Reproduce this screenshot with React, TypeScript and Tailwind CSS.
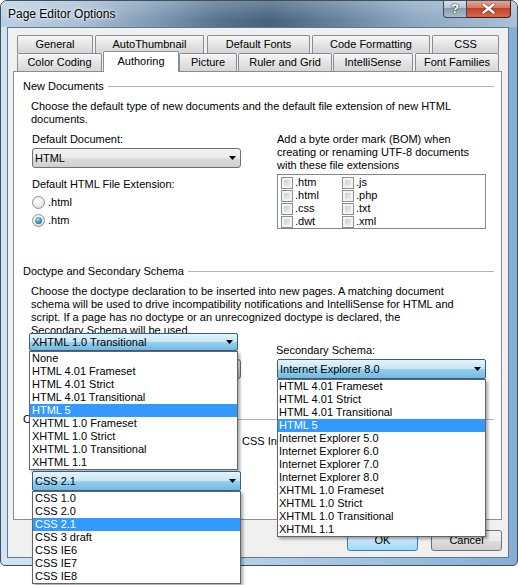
import React from "react";

const Arrow = () => (
  <svg width="7" height="4" viewBox="0 0 7 4" className="shrink-0">
    <path d="M0 0H7L3.5 4Z" fill="#000" />
  </svg>
);

const tabBase =
  "h-[18px] flex items-center justify-center border-t border-x border-[#898c95] rounded-t-[2px] bg-[linear-gradient(#f6f6f6,#e3e3e3_55%,#d6d6d6)] whitespace-nowrap shrink-0";

const comboClosed =
  "h-[20px] w-[209px] flex items-center pl-[2px] pr-[4px] border border-[#707070] rounded-[3px] bg-[linear-gradient(#f2f2f2,#ebebeb_50%,#dddddd_50%,#cfcfcf)]";

const comboOpen =
  "flex items-center pl-[2px] pr-[4px] border border-[#2c628b] rounded-[2px] bg-[linear-gradient(#e5f4fc,#c4e5f6_50%,#98d1ef_50%,#74b9e0)]";

function Radio({ checked }: { checked?: boolean }) {
  return (
    <span className="w-[13px] h-[13px] rounded-full border border-[#8e8f8f] bg-[radial-gradient(circle_at_40%_35%,#ffffff,#f0f0f0_45%,#cfcfcf)] flex items-center justify-center shrink-0">
      {checked && (
        <span className="w-[7px] h-[7px] rounded-full bg-[radial-gradient(circle_at_40%_35%,#a9dcf9,#3d8ac4_55%,#17507f)]" />
      )}
    </span>
  );
}

function Check({ label }: { label: string }) {
  return (
    <div className="flex items-center gap-[2px] h-[13px]">
      <span className="w-[12px] h-[12px] border border-[#8f8f8f] bg-[#f4f4f4] p-[2px] shrink-0">
        <span className="block w-full h-full bg-[linear-gradient(135deg,#c9cdd3,#eeeeee)]" />
      </span>
      <span>{label}</span>
    </div>
  );
}

function ListItems({ items, sel, pad }: { items: string[]; sel: string; pad: string }) {
  return (
    <>
      {items.map((t) => (
        <div
          key={t}
          className={
            t === sel
              ? `h-[13px] leading-[13px] whitespace-nowrap bg-[#3399ff] text-white ${pad}`
              : `h-[13px] leading-[13px] whitespace-nowrap ${pad}`
          }
        >
          {t}
        </div>
      ))}
    </>
  );
}

function Heading({ label, className }: { label: string; className: string }) {
  return (
    <div className={`pl-[9px] pr-[7px] flex items-center gap-[4px] ${className}`}>
      <span className="whitespace-nowrap">{label}</span>
      <div className="flex-1 h-px bg-[#b5b5b5]" />
    </div>
  );
}

export default function App() {
  return (
    <div className="relative w-[518px] h-[585px] bg-white overflow-hidden font-['Liberation_Sans',Arial,sans-serif] text-[11px] leading-[13px] text-black">
      {/* window */}
      <div className="w-[518px] h-[566px] flex flex-col border border-[#3d4f63] rounded-t-[7px] rounded-b-[5px] overflow-hidden bg-[linear-gradient(90deg,#d3e3f2,#b4cfe8_50%,#86aed4)]">
        {/* title bar */}
        <div className="h-[26px] shrink-0 flex items-start bg-[linear-gradient(180deg,rgba(255,255,255,0.22),rgba(255,255,255,0)_75%),linear-gradient(90deg,#bccfe2_0%,#a9c0d6_15%,#7e98b2_30%,#57728e_42%,#48627d_52%,#67839f_66%,#8ea8c1_80%,#aac1d7_100%)]">
          <div className="pl-[7px] pt-[6px] text-[12px] leading-[14px] [text-shadow:0_0_6px_#ffffff,0_0_3px_#ffffff]">
            Page Editor Options
          </div>
          <div className="ml-auto mr-[6px] -mt-px flex">
            <div className="w-[24px] h-[18px] border border-t-0 border-[#3a4a5c] rounded-bl-[4px] bg-[linear-gradient(#dbe3ea,#b3c1cf_50%,#8d9db0_50%,#aabbcc)] flex items-center justify-center text-white font-bold text-[13px] leading-[13px] [text-shadow:0_0_2px_#1d2b3a,0_0_1px_#1d2b3a]">
              ?
            </div>
            <div className="w-[44px] h-[18px] border border-t-0 border-l-0 border-[#4a1b14] rounded-br-[4px] bg-[linear-gradient(#e9ab9f,#d4735f_50%,#c0412a_50%,#d66a4b)] flex items-center justify-center">
              <svg width="15" height="11" viewBox="0 0 15 11">
                <path d="M2.5 1.5L12.5 9.5M12.5 1.5L2.5 9.5" stroke="#5a1a10" strokeWidth="4" strokeLinecap="round" opacity="0.55" />
                <path d="M2.5 1.5L12.5 9.5M12.5 1.5L2.5 9.5" stroke="#ffffff" strokeWidth="2.4" strokeLinecap="round" />
              </svg>
            </div>
          </div>
        </div>

        {/* client area */}
        <div className="ml-[6px] mr-[8px] h-[531px] shrink-0 border border-[#5f7893] bg-[#f0f0f0] flex flex-col">
          <div className="ml-[5px] mt-[7px] w-[489px]">
            {/* tab row 1 */}
            <div className="flex h-[18px]">
              <div className={`${tabBase} ml-[4px] w-[76px]`}>General</div>
              <div className={`${tabBase} ml-[2px] w-[109px]`}>AutoThumbnail</div>
              <div className={`${tabBase} ml-[3px] w-[103px]`}>Default Fonts</div>
              <div className={`${tabBase} ml-[2px] w-[118px]`}>Code Formatting</div>
              <div className={`${tabBase} ml-[2px] w-[67px]`}>CSS</div>
            </div>
            {/* tab row 2 */}
            <div className="flex h-[18px] items-end">
              <div className={`${tabBase} ml-[4px] w-[85px]`}>Color Coding</div>
              <div className="relative z-10 ml-[1px] w-[76px] h-[21px] -mb-px shrink-0 flex items-center justify-center pb-[1px] border-t border-x border-[#898c95] rounded-t-[2px] bg-white">
                Authoring
              </div>
              <div className={`${tabBase} w-[58px]`}>Picture</div>
              <div className={`${tabBase} ml-[1px] w-[94px]`}>Ruler and Grid</div>
              <div className={`${tabBase} ml-[1px] w-[80px]`}>IntelliSense</div>
              <div className={`${tabBase} ml-[2px] w-[84px]`}>Font Families</div>
            </div>
            {/* panel */}
            <div className="h-[449px] w-[489px] border border-[#898c95] bg-white">
              <Heading label="New Documents" className="pt-[8px]" />
              <p className="mt-[7px] pl-[17px] whitespace-nowrap">
                Choose the default type of new documents and the default file extension of new HTML
                <br />
                documents.
              </p>
              <div className="mt-[7px] pl-[18px] flex">
                <div className="w-[209px] shrink-0">
                  <div>Default Document:</div>
                  <div className={`mt-[2px] ${comboClosed}`}>
                    <span>HTML</span>
                    <span className="ml-auto">
                      <Arrow />
                    </span>
                  </div>
                  <div className="mt-[10px]">Default HTML File Extension:</div>
                  <div className="mt-[5px] h-[13px] flex items-center gap-[3px]">
                    <Radio />
                    <span>.html</span>
                  </div>
                  <div className="mt-[5px] h-[13px] flex items-center gap-[3px]">
                    <Radio checked />
                    <span>.htm</span>
                  </div>
                </div>
                <div className="ml-[36px] w-[209px] shrink-0">
                  <div className="whitespace-nowrap">
                    Add a byte order mark (BOM) when
                    <br />
                    creating or renaming UTF-8 documents
                    <br />
                    with these file extensions
                  </div>
                  <div className="mt-[2px] h-[55px] w-[209px] border border-[#828790] bg-white pt-[1px] pl-[3px] grid grid-cols-[61px_1fr] overflow-hidden">
                    <div>
                      <Check label=".htm" />
                      <Check label=".html" />
                      <Check label=".css" />
                      <Check label=".dwt" />
                    </div>
                    <div>
                      <Check label=".js" />
                      <Check label=".php" />
                      <Check label=".txt" />
                      <Check label=".xml" />
                    </div>
                  </div>
                </div>
              </div>

              <Heading label="Doctype and Secondary Schema" className="mt-[36px]" />
              <p className="mt-[7px] pl-[17px] whitespace-nowrap">
                Choose the doctype declaration to be inserted into new pages. A matching document
                <br />
                schema will be used to drive incompatibility notifications and IntelliSense for HTML and
                <br />
                script. If a page has no doctype or an unrecognized doctype is declared, the
                <br />
                Secondary Schema will be used.
              </p>
              <div className="mt-[7px] pl-[18px] flex">
                <div className="w-[209px] shrink-0">
                  <div className="h-[13px]" />
                  <div className={`mt-[2px] ${comboClosed}`} />
                </div>
                <div className="ml-[35px] w-[210px] shrink-0">
                  <div>Secondary Schema:</div>
                  <div className="mt-[2px] h-[20px]" />
                </div>
              </div>

              <Heading label="C" className="mt-[34px]" />
              <div className="mt-[9px] pl-[228px] whitespace-nowrap">CSS Int</div>
            </div>
          </div>

          {/* buttons */}
          <div className="mt-[10px] mr-[6px] flex justify-end">
            <div className="w-[71px] h-[21px] border border-[#3c7fb1] rounded-[3px] bg-[linear-gradient(#eaf6fd,#d9f0fc_50%,#bee6fd_50%,#a7d9f5)] flex items-center justify-center">
              OK
            </div>
            <div className="ml-[13px] w-[71px] h-[21px] border border-[#707070] rounded-[3px] bg-[linear-gradient(#f2f2f2,#ebebeb_50%,#dddddd_50%,#cfcfcf)] flex items-center justify-center">
              Cancel
            </div>
          </div>
        </div>
      </div>

      {/* open drop-down: doctype */}
      <div className="absolute left-[29px] top-[333px] w-[209px]">
        <div className={`h-[18px] ${comboOpen}`}>
          <span>XHTML 1.0 Transitional</span>
          <span className="ml-auto">
            <Arrow />
          </span>
        </div>
        <div className="border border-[#646464] bg-white shadow-[2px_2px_3px_rgba(0,0,0,0.35)]">
          <ListItems
            pad="pl-[2px]"
            sel="HTML 5"
            items={[
              "None",
              "HTML 4.01 Frameset",
              "HTML 4.01 Strict",
              "HTML 4.01 Transitional",
              "HTML 5",
              "XHTML 1.0 Frameset",
              "XHTML 1.0 Strict",
              "XHTML 1.0 Transitional",
              "XHTML 1.1",
            ]}
          />
        </div>
      </div>

      {/* open drop-down: secondary schema */}
      <div className="absolute left-[277px] top-[359px] w-[209px]">
        <div className={`h-[20px] ${comboOpen}`}>
          <span>Internet Explorer 8.0</span>
          <span className="ml-auto">
            <Arrow />
          </span>
        </div>
        <div className="border border-[#646464] bg-white shadow-[2px_2px_3px_rgba(0,0,0,0.35)]">
          <ListItems
            pad="pl-[1px]"
            sel="HTML 5"
            items={[
              "HTML 4.01 Frameset",
              "HTML 4.01 Strict",
              "HTML 4.01 Transitional",
              "HTML 5",
              "Internet Explorer 5.0",
              "Internet Explorer 6.0",
              "Internet Explorer 7.0",
              "Internet Explorer 8.0",
              "XHTML 1.0 Frameset",
              "XHTML 1.0 Strict",
              "XHTML 1.0 Transitional",
              "XHTML 1.1",
            ]}
          />
        </div>
      </div>

      {/* open drop-down: css */}
      <div className="absolute left-[32px] top-[471px] w-[209px]">
        <div className={`h-[20px] ${comboOpen}`}>
          <span>CSS 2.1</span>
          <span className="ml-auto">
            <Arrow />
          </span>
        </div>
        <div className="border border-[#646464] bg-white shadow-[2px_2px_3px_rgba(0,0,0,0.35)]">
          <ListItems
            pad="pl-[2px]"
            sel="CSS 2.1"
            items={["CSS 1.0", "CSS 2.0", "CSS 2.1", "CSS 3 draft", "CSS IE6", "CSS IE7", "CSS IE8"]}
          />
        </div>
      </div>
    </div>
  );
}
